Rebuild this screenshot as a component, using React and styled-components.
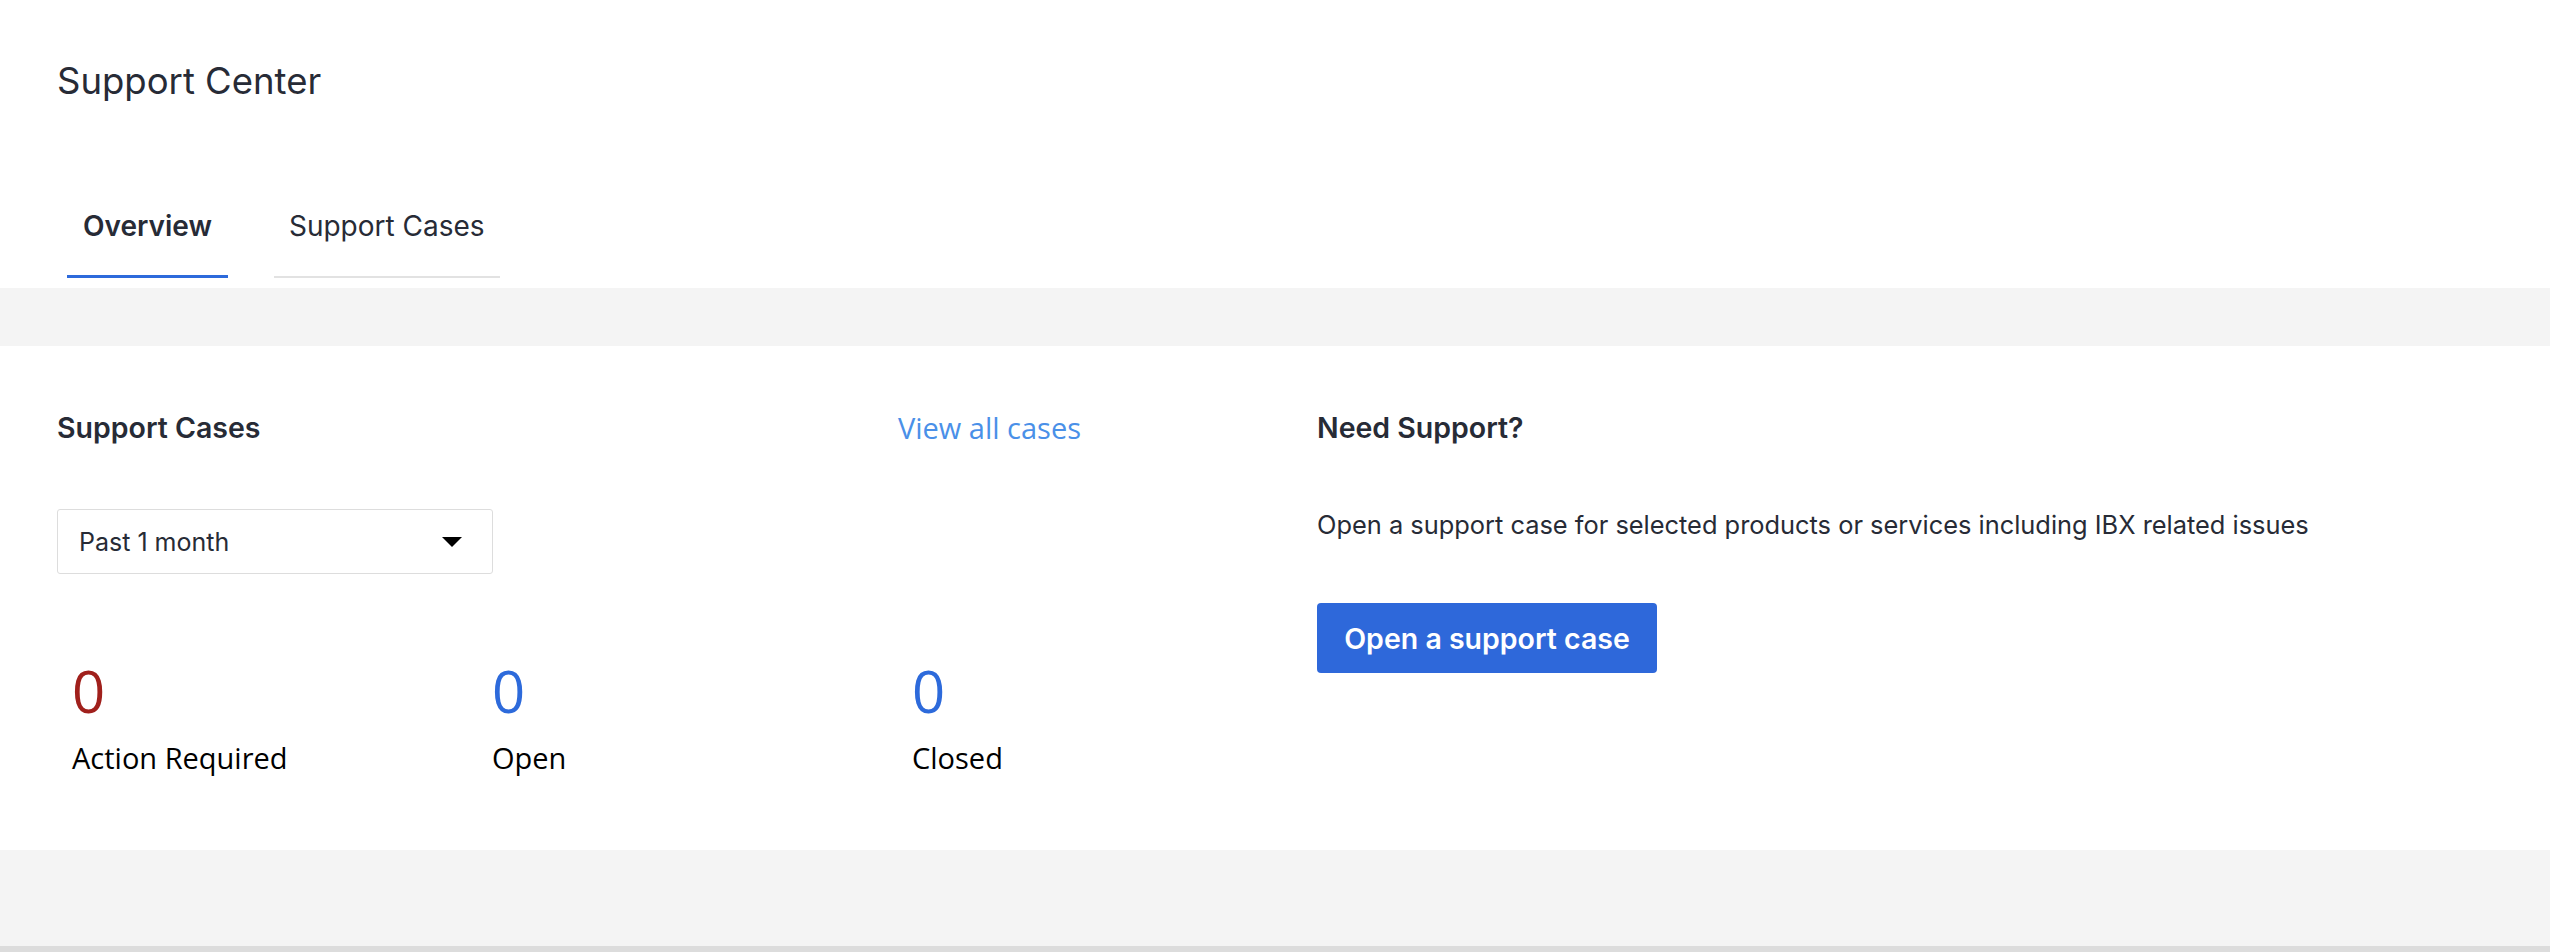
import React, { useState } from "react";
import styled, { createGlobalStyle } from "styled-components";

const GlobalStyle = createGlobalStyle`
  html, body {
    margin: 0;
    padding: 0;
    background: #f4f4f4;
  }
  body {
    font-family: Inter, Lato, Arial, sans-serif;
    color: #272b36;
  }
  * {
    box-sizing: border-box;
  }
`;

const Page = styled.div`
  min-height: 100vh;
  display: flex;
  flex-direction: column;
  background: #f4f4f4;
`;

const Header = styled.header`
  background: #ffffff;
  padding: 60px 57px 10px;
`;

const Title = styled.h1`
  margin: 0;
  font-size: 36.5px;
  line-height: 42px;
  font-weight: 400;
  color: #272b36;
`;

const TabRow = styled.nav`
  display: flex;
  align-items: flex-end;
  gap: 46px;
  margin: 106px 0 0 10px;
`;

const Tab = styled.button`
  border: none;
  background: none;
  font-family: Inter, Lato, Arial, sans-serif;
  font-size: 28px;
  line-height: 36px;
  color: #272b36;
  cursor: pointer;
  font-weight: ${(p) => (p.$active ? 600 : 400)};
  padding: 0 ${(p) => (p.$active ? "16px 31px" : "15px 32px")};
  border-bottom: ${(p) => (p.$active ? "3px solid #2d6adb" : "2px solid #e2e2e2")};
`;

const Band = styled.div`
  height: 58px;
`;

const Card = styled.section`
  background: #ffffff;
  padding: 65px 57px 74px;
  display: grid;
  grid-template-columns: 1024px 1fr;
  column-gap: 236px;
`;

const Column = styled.div`
  display: flex;
  flex-direction: column;
  align-items: flex-start;
`;

const CardHead = styled.div`
  display: flex;
  justify-content: space-between;
  align-items: center;
  align-self: stretch;
`;

const SectionTitle = styled.h2`
  margin: 0;
  font-size: 28.5px;
  line-height: 34px;
  font-weight: 600;
  color: #272b36;
`;

const ViewLink = styled.a`
  font-family: "Open Sans", Arial, sans-serif;
  font-size: 29px;
  line-height: 34px;
  color: #4a90e8;
  text-decoration: none;
  cursor: pointer;
`;

const Select = styled.div`
  margin-top: 64px;
  width: 436px;
  height: 65px;
  border: 1px solid #dddddd;
  border-radius: 3px;
  display: flex;
  align-items: center;
  justify-content: space-between;
  padding: 0 30px 0 21px;
  font-size: 25px;
  color: #272b36;
  cursor: pointer;
`;

const Caret = styled.span`
  width: 0;
  height: 0;
  border-left: 10px solid transparent;
  border-right: 10px solid transparent;
  border-top: 10px solid #000000;
`;

const Stats = styled.div`
  margin-top: 82px;
  padding-left: 15px;
  display: grid;
  grid-template-columns: repeat(3, 420px);
`;

const Stat = styled.div`
  display: flex;
  flex-direction: column;
  gap: 14px;
`;

const Count = styled.span`
  font-family: "Open Sans", Arial, sans-serif;
  font-size: 58px;
  line-height: 70px;
  color: ${(p) => p.$color};
`;

const StatLabel = styled.span`
  font-family: "Open Sans", Arial, sans-serif;
  font-size: 29px;
  line-height: 36px;
  color: #000000;
`;

const Description = styled.p`
  margin: 63px 0 0;
  font-size: 25.4px;
  line-height: 34px;
  color: #272b36;
`;

const PrimaryButton = styled.button`
  margin-top: 61px;
  width: 340px;
  height: 70px;
  border: none;
  border-radius: 4px;
  background: #2e68da;
  color: #ffffff;
  font-family: Inter, Lato, Arial, sans-serif;
  font-size: 28.5px;
  font-weight: 600;
  cursor: pointer;
`;

const Filler = styled.div`
  flex: 1;
  border-bottom: 6px solid #dcdcdc;
`;

const stats = [
  { value: 0, label: "Action Required", color: "#a0201c" },
  { value: 0, label: "Open", color: "#2d6adb" },
  { value: 0, label: "Closed", color: "#2d6adb" },
];

const App = () => {
  const [tab, setTab] = useState("overview");

  return (
    <Page>
      <GlobalStyle />
      <Header>
        <Title>Support Center</Title>
        <TabRow>
          <Tab $active={tab === "overview"} onClick={() => setTab("overview")}>
            Overview
          </Tab>
          <Tab $active={tab === "cases"} onClick={() => setTab("cases")}>
            Support Cases
          </Tab>
        </TabRow>
      </Header>
      <Band />
      <Card>
        <Column>
          <CardHead>
            <SectionTitle>Support Cases</SectionTitle>
            <ViewLink>View all cases</ViewLink>
          </CardHead>
          <Select>
            <span>Past 1 month</span>
            <Caret />
          </Select>
          <Stats>
            {stats.map((s) => (
              <Stat key={s.label}>
                <Count $color={s.color}>{s.value}</Count>
                <StatLabel>{s.label}</StatLabel>
              </Stat>
            ))}
          </Stats>
        </Column>
        <Column>
          <SectionTitle>Need Support?</SectionTitle>
          <Description>
            Open a support case for selected products or services including IBX
            related issues
          </Description>
          <PrimaryButton>Open a support case</PrimaryButton>
        </Column>
      </Card>
      <Filler />
    </Page>
  );
};

export default App;
